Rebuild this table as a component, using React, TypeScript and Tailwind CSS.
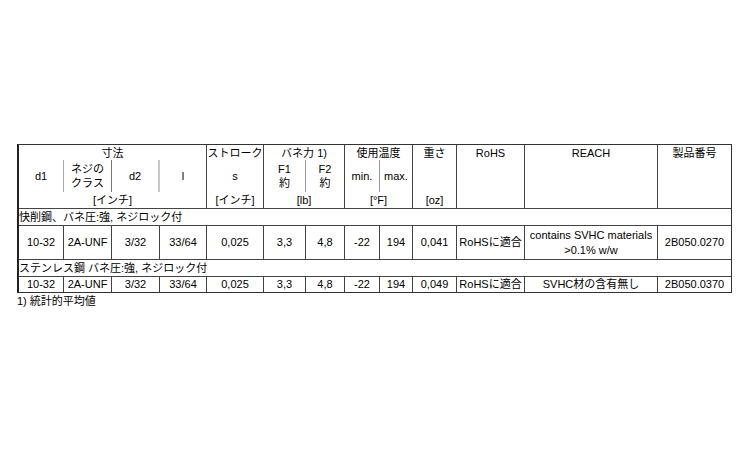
import React from "react";

const font = "font-['Liberation_Sans','Noto_Sans_CJK_JP',sans-serif]";

function DataRow({ h, cells }: { h: string; cells: React.ReactNode[] }) {
  const widths = [
    "w-[45px]",
    "w-[48px]",
    "w-[48px]",
    "w-[47px]",
    "w-[57px]",
    "w-[42px]",
    "w-[39px]",
    "w-[35px]",
    "w-[33px]",
    "w-[44px]",
    "w-[68px]",
    "w-[133px]",
    "w-[73px]",
  ];
  return (
    <div className={`flex ${h} border-b border-[#444]`}>
      {cells.map((c, i) => (
        <div
          key={i}
          className={`${widths[i]} shrink-0 flex items-center justify-center text-center leading-[15px] ${
            i < cells.length - 1 ? "border-r border-[#444]" : ""
          }`}
        >
          {c}
        </div>
      ))}
    </div>
  );
}

export default function App() {
  return (
    <div className={`w-[750px] h-[450px] bg-white text-black text-[11px] pt-[144px] pl-[17px] ${font}`}>
      <div className="w-[715px] border-t border-r border-b border-l-2 border-t-[#333] border-r-[#333] border-b-[#333] border-l-[#222]">
        {/* Header */}
        <div className="flex h-[64px] border-b border-[#444] leading-[14px]">
          {/* 寸法 */}
          <div className="w-[188px] shrink-0 border-r border-[#444] flex flex-col">
            <div className="h-[15px] flex items-center justify-center">寸法</div>
            <div className="h-[32px] flex">
              <div className="w-[45px] border-r border-[#aaa] flex items-center justify-center">d1</div>
              <div className="w-[48px] border-r border-[#777] flex flex-col items-center justify-center">
                <span>ネジの</span>
                <span>クラス</span>
              </div>
              <div className="w-[48px] border-r-2 border-[#c8c8c8] flex items-center justify-center">d2</div>
              <div className="w-[46px] flex items-center justify-center">l</div>
            </div>
            <div className="h-[16px] flex items-center justify-center">[インチ]</div>
          </div>
          {/* ストローク */}
          <div className="w-[57px] shrink-0 border-r border-[#444] flex flex-col">
            <div className="h-[15px] flex items-center justify-center">ストローク</div>
            <div className="h-[32px] flex items-center justify-center">s</div>
            <div className="h-[16px] flex items-center justify-center">[インチ]</div>
          </div>
          {/* バネ力 */}
          <div className="w-[81px] shrink-0 border-r border-[#444] flex flex-col">
            <div className="h-[15px] flex items-center justify-center">バネ力 1)</div>
            <div className="h-[32px] flex">
              <div className="w-[42px] border-r border-[#999] flex flex-col items-center justify-center">
                <span>F1</span>
                <span>約</span>
              </div>
              <div className="w-[38px] flex flex-col items-center justify-center">
                <span>F2</span>
                <span>約</span>
              </div>
            </div>
            <div className="h-[16px] flex items-center justify-center">[lb]</div>
          </div>
          {/* 使用温度 */}
          <div className="w-[68px] shrink-0 border-r border-[#444] flex flex-col">
            <div className="h-[15px] flex items-center justify-center">使用温度</div>
            <div className="h-[32px] flex">
              <div className="w-[35px] border-r border-[#999] flex items-center justify-center">min.</div>
              <div className="w-[32px] flex items-center justify-center">max.</div>
            </div>
            <div className="h-[16px] flex items-center justify-center">[°F]</div>
          </div>
          {/* 重さ */}
          <div className="w-[44px] shrink-0 border-r border-[#444] flex flex-col">
            <div className="h-[15px] flex items-center justify-center">重さ</div>
            <div className="h-[32px]" />
            <div className="h-[16px] flex items-center justify-center">[oz]</div>
          </div>
          <div className="w-[68px] shrink-0 border-r border-[#444] flex flex-col">
            <div className="h-[15px] flex items-center justify-center">RoHS</div>
          </div>
          <div className="w-[133px] shrink-0 border-r border-[#444] flex flex-col">
            <div className="h-[15px] flex items-center justify-center">REACH</div>
          </div>
          <div className="w-[73px] shrink-0 flex flex-col">
            <div className="h-[15px] flex items-center justify-center">製品番号</div>
          </div>
        </div>

        {/* Section 1 */}
        <div className="h-[17px] border-b border-[#444] flex items-center leading-[14px]">
          快削鋼、バネ圧:強, ネジロック付
        </div>
        <DataRow
          h="h-[34px]"
          cells={[
            "10-32",
            "2A-UNF",
            "3/32",
            "33/64",
            "0,025",
            "3,3",
            "4,8",
            "-22",
            "194",
            "0,041",
            "RoHSに適合",
            <span>
              contains SVHC materials
              <br />
              &gt;0.1% w/w
            </span>,
            "2B050.0270",
          ]}
        />
        {/* Section 2 */}
        <div className="h-[17px] border-b border-[#444] flex items-center leading-[14px]">
          ステンレス鋼 バネ圧:強, ネジロック付
        </div>
        <div className="[&>div]:border-b-0">
          <DataRow
            h="h-[15px]"
            cells={[
              "10-32",
              "2A-UNF",
              "3/32",
              "33/64",
              "0,025",
              "3,3",
              "4,8",
              "-22",
              "194",
              "0,049",
              "RoHSに適合",
              "SVHC材の含有無し",
              "2B050.0370",
            ]}
          />
        </div>
      </div>
      <div className="mt-[1px] leading-[14px]">1) 統計的平均値</div>
    </div>
  );
}
